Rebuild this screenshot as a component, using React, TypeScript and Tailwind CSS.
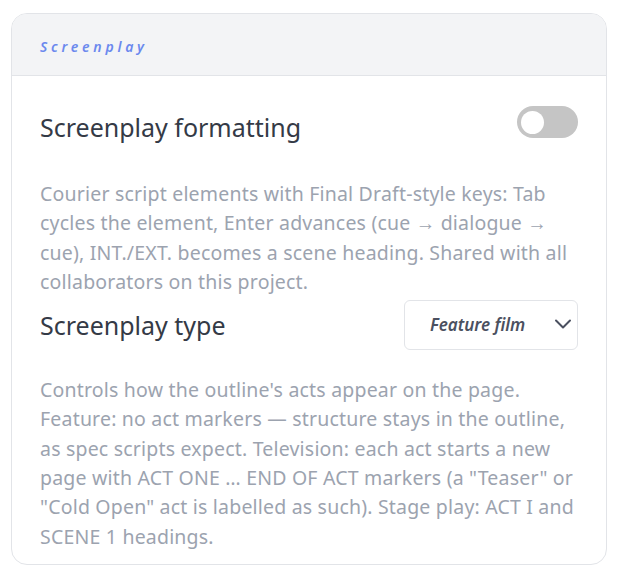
import { useState } from 'react';

const FONT = "font-['Noto_Sans','Open_Sans',sans-serif]";

function Toggle({ on, onChange }: { on: boolean; onChange: (v: boolean) => void }) {
  return (
    <button
      type="button"
      role="switch"
      aria-checked={on}
      onClick={() => onChange(!on)}
      className={`relative flex h-[32px] w-[61px] shrink-0 items-center rounded-full px-[4px] transition-colors ${
        on ? 'justify-end bg-blue-500' : 'justify-start bg-[#c5c5c5]'
      }`}
    >
      <span className="h-[23px] w-[23px] rounded-full bg-white" />
    </button>
  );
}

export default function App() {
  const [formatting, setFormatting] = useState(false);
  const [type, setType] = useState('Feature film');

  return (
    <div className={`min-h-[580px] bg-white pl-[11px] pt-[13px] ${FONT}`}>
      <section className="w-[596px] overflow-hidden rounded-2xl border border-[#e2e4e8] bg-white">
        <header className="flex h-[62px] items-center border-b border-[#e2e4e8] bg-[#f3f4f6] px-7">
          <h2 className="pt-[3px] text-[14px] font-semibold italic tracking-[0.27em] text-[#6b89ee]">Screenplay</h2>
        </header>

        <div className="px-7 pb-[13px] pt-[30px]">
          <div className="flex items-start justify-between">
            <h3 className="pt-[3px] text-[25px] leading-9 text-[#343a46]">Screenplay formatting</h3>
            <Toggle on={formatting} onChange={setFormatting} />
          </div>
          <p className="mt-[34px] text-[19.5px] leading-[29.3px] tracking-[0.01em] text-[#9ca3af]">
            Courier script elements with Final Draft-style keys: Tab cycles the element, Enter advances (cue → dialogue →
            cue), INT./EXT. becomes a scene heading. Shared with all collaborators on this project.
          </p>

          <div className="mt-[4px] flex items-start justify-between">
            <h3 className="pt-[7px] text-[25px] leading-9 text-[#343a46]">Screenplay type</h3>
            <div className="relative">
              <select
                value={type}
                onChange={(e) => setType(e.target.value)}
                className="h-[50px] w-[174px] appearance-none rounded-md border border-[#e2e4e8] bg-white pl-[25px] pr-10 text-[17px] font-semibold italic text-[#4b5060] outline-none"
              >
                <option>Feature film</option>
                <option>Television</option>
                <option>Stage play</option>
              </select>
              <svg
                viewBox="0 0 18 10"
                className="pointer-events-none absolute right-[6px] top-[19px] h-[10px] w-[18px] text-[#4b5060]"
                fill="none"
                stroke="currentColor"
                strokeWidth={2}
                strokeLinecap="round"
                strokeLinejoin="round"
              >
                <path d="M2 1.5l7 7 7-7" />
              </svg>
            </div>
          </div>
          <p className="mt-[25px] text-[19.5px] leading-[29.3px] tracking-[0.01em] text-[#9ca3af]">
            Controls how the outline's acts appear on the page.
            <br />
            Feature: no act markers — structure stays in the outline, as spec scripts expect. Television: each act starts a
            new page with ACT ONE … END OF ACT markers (a "Teaser" or "Cold Open" act is labelled as such). Stage play: ACT
            I and SCENE 1 headings.
          </p>
        </div>
      </section>
    </div>
  );
}
